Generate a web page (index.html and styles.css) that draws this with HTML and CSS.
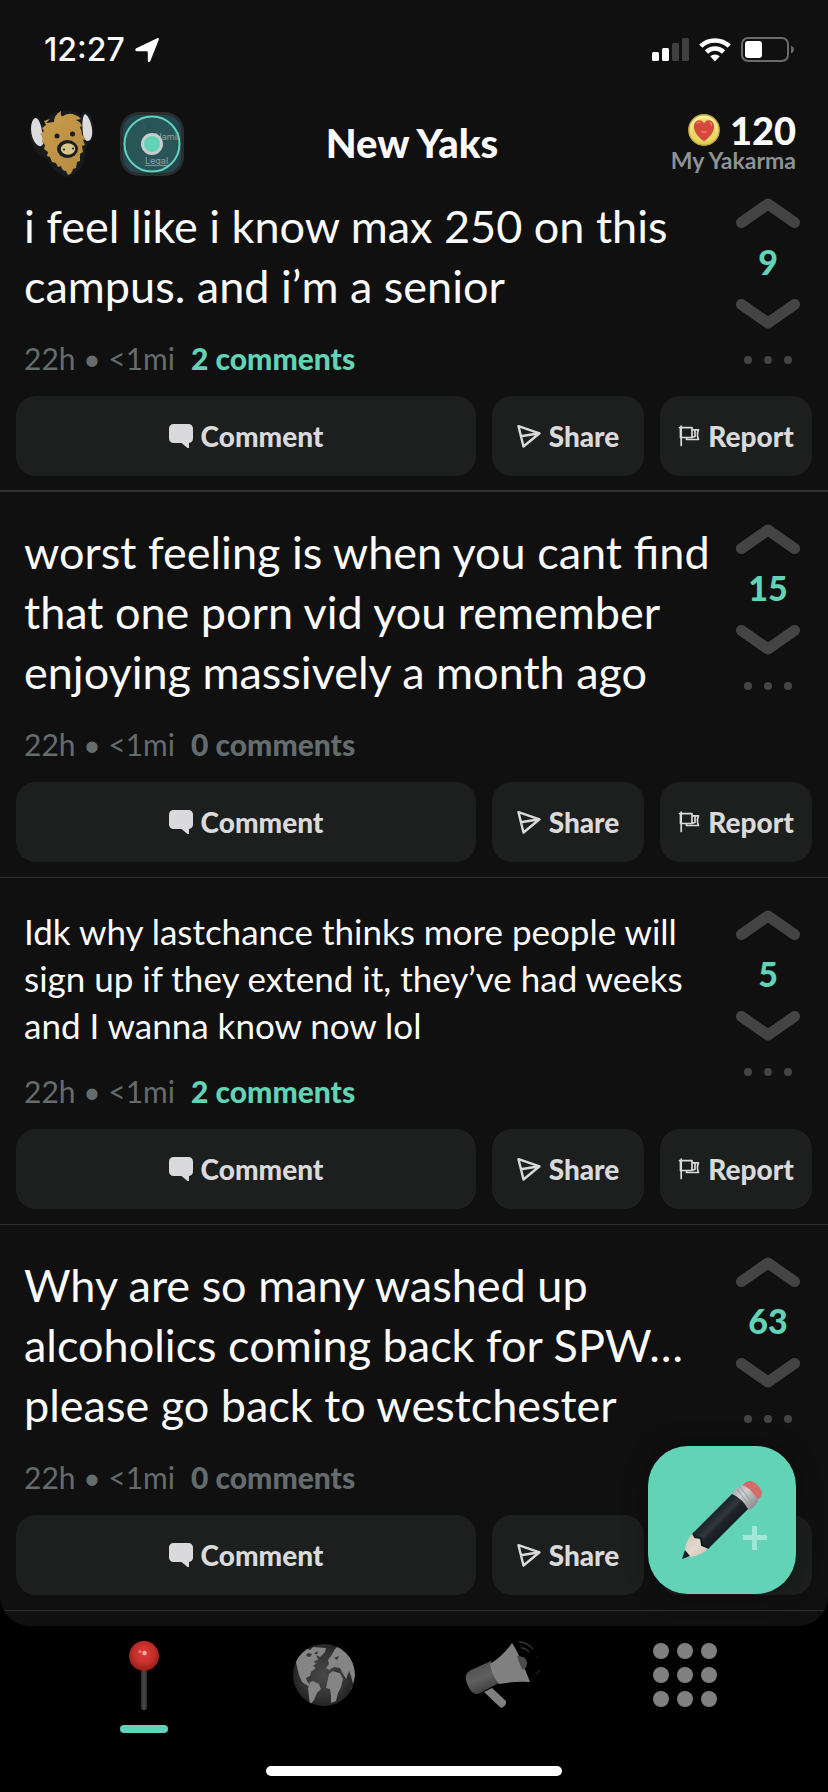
FILE: index.html
```
<!DOCTYPE html>
<html lang="en">
<head>
<meta charset="utf-8">
<meta name="viewport" content="width=device-width, initial-scale=1">
<title>New Yaks</title>
<link rel="stylesheet" href="styles.css">
</head>
<body>
<svg class="sprite" width="0" height="0" aria-hidden="true">
  <symbol id="i-up" viewBox="0 0 64 30"><path d="M5.500 24.500 32 6 58.500 24.500" fill="none" stroke="currentColor" stroke-width="11" stroke-linecap="round" stroke-linejoin="round"/></symbol>
  <symbol id="i-down" viewBox="0 0 64 30"><path d="M5.500 5.500 32 24 58.500 5.500" fill="none" stroke="currentColor" stroke-width="11" stroke-linecap="round" stroke-linejoin="round"/></symbol>
  <symbol id="i-dots" viewBox="0 0 48 8"><circle cx="4" cy="4" r="4"/><circle cx="24" cy="4" r="4"/><circle cx="44" cy="4" r="4"/></symbol>
  <symbol id="i-comment" viewBox="0 0 24 24"><path d="M4.500 0h15A4.500 4.500 0 0 1 24 4.500v10c0 2.500-1.500 4.300-4 4.500V24h-1.500L12.500 19h-8A4.500 4.500 0 0 1 0 14.500v-10A4.500 4.500 0 0 1 4.500 0z"/></symbol>
  <symbol id="i-share" viewBox="0 0 24 24"><path d="M1.500 2.200 22.500 9.300 6.500 22.500zM3.800 12.200 22.500 9.300" fill="none" stroke="currentColor" stroke-width="2.400" stroke-linejoin="round"/></symbol>
  <symbol id="i-flag" viewBox="0 0 22 22"><path d="M3.200 1v19.500M1.500 2.600H14V12.500H2.500V2.600M14 4.800h6.500c-1.500 3-1.500 6 0 9.700H8.500v-2M17 5v6.500l-3 .8" fill="none" stroke="currentColor" stroke-width="1.700" stroke-linejoin="round" stroke-linecap="round"/></symbol>
</svg>
<div class="app">
  <header class="top">
    <div class="status">
      <div class="status-left">
        <span class="clock">12:27</span>
        <svg width="24" height="24" viewBox="0 0 24 24" fill="#fff" aria-hidden="true"><path d="M1.300 10.300 22.200.2c1-.5 2 .5 1.600 1.600L15.300 23c-.5 1.400-2.500 1.300-2.500-.3v-8.200c0-.8-.4-1.200-1.200-1.200H1.900C0 13.300-.4 11.100 1.300 10.300z"/></svg>
      </div>
      <div class="status-right">
        <svg width="37" height="24" viewBox="0 0 37 24" aria-hidden="true"><g fill="#fff"><rect y="14" width="7" height="9" rx="1.500"/><rect x="10" y="10" width="7" height="13" rx="1.500"/></g><g fill="#404040"><rect x="20" y="5" width="7" height="18" rx="1.500"/><rect x="30" width="7" height="23" rx="1.500"/></g></svg>
        <svg width="32" height="24" viewBox="0 0 32 24" aria-hidden="true"><g fill="none" stroke="#fff" stroke-width="4.600"><path d="M1.800 8.200a20.400 20.400 0 0 1 28.400 0"/><path d="M7.400 14a12.300 12.300 0 0 1 17.200 0"/></g><path d="M11.200 18.300a7 7 0 0 1 9.600 0L16 23.500z" fill="#fff"/></svg>
        <svg width="53" height="26" viewBox="0 0 53 26" aria-hidden="true"><rect x="1" y="1" width="46" height="23" rx="6" fill="none" stroke="#6b6b6b" stroke-width="2"/><rect x="4" y="4" width="17" height="17" rx="3" fill="#fff"/><path d="M50 8.500q3 1.500 3 4t-3 4z" fill="#6b6b6b"/></svg>
      </div>
    </div>
    <div class="titlebar">
      <div class="tools">
        <button class="plain" aria-label="Profile">
          <svg width="68" height="68" viewBox="0 0 68 68">
            <defs><linearGradient id="fur" x1="0" x2="1" y2="1"><stop offset="0" stop-color="#c99d4c"/><stop offset="1" stop-color="#b48a3e"/></linearGradient></defs>
            <path d="M2 21C3 12 6 7 9 7q4 0 6 8l3-4q3-8 14-10 14-2 21 5 1-5 5-4 8 3 8 20-1 9-6 9-2 8-4 19c-2 9-6 13-17 17-8-2-14-8-20-18C9 44 1 36 2 21z" fill="#171b1e"/>
            <path d="M7 8c4-1 8 9 8 26-2 4-6 2-9-3C1 21 3 10 7 8zM57 4c6 3 10 21 5 26-3 3-7-1-7-7-1-8-1-16 2-19z" fill="#dcdbdd"/>
            <path d="m18 13 8-1q0-7 7-11-1 6 2 5 6-4 12-1 4 1 6 4l-5 1q5 2 6 6l-2 1q2 4 2 8l4 4-3 1 2 5-3 1 1 6-3 2v7l-3 1-1 6-3 1q-1 5-5 6l-2-4q-4 0-5-5l-3 1-2-4-4-1-2-5-3-1 1-4-4-3 1-4-3-3 1-5-3-3 4-3-2-3 4-3-2-4 6-2z" fill="url(#fur)"/>
            <circle cx="29" cy="26" r="2.500" fill="#171b20"/><circle cx="44.500" cy="24" r="2.500" fill="#171b20"/>
            <ellipse cx="39.500" cy="39" rx="10.500" ry="9" fill="#1b1d20"/><ellipse cx="40" cy="39" rx="7.200" ry="5.700" fill="#d6c588"/><circle cx="36" cy="39.500" r="1.100" fill="#292621"/><circle cx="45" cy="38.500" r="1.100" fill="#292621"/>
          </svg>
        </button>
        <button class="plain" aria-label="Map">
          <svg width="64" height="64" viewBox="0 0 64 64">
            <defs><clipPath id="mapclip"><rect x="3" y="3" width="58" height="58" rx="15"/></clipPath></defs>
            <rect width="64" height="64" rx="19" fill="#2a2d2e"/>
            <g clip-path="url(#mapclip)"><rect x="3" y="3" width="58" height="58" fill="#23464f"/><circle cx="32" cy="32" r="28" fill="#2a5557"/><path d="m21 6 5 13" stroke="#355b62" stroke-width="1"/>
            <text class="map-place" x="35" y="28">Hamil</text><text class="map-legal" x="25" y="52">Legal</text></g>
            <circle cx="32" cy="32" r="27.500" fill="none" stroke="#62d3b6" stroke-width="2"/>
            <circle cx="32" cy="32" r="11" fill="#c9cbce"/><circle cx="32" cy="32" r="8" fill="#62d3b6"/>
          </svg>
        </button>
      </div>
      <h1 class="title">New Yaks</h1>
      <div class="karma">
        <div class="karma-row">
          <svg width="32" height="32" viewBox="0 0 32 32" aria-hidden="true"><defs><linearGradient id="coin" x2="0" y2="1"><stop offset="0" stop-color="#fff3a0"/><stop offset="1" stop-color="#dfcb4e"/></linearGradient></defs><circle cx="16" cy="16" r="15.200" fill="url(#coin)" stroke="#c6a93c" stroke-width="1.400"/><circle cx="16" cy="16" r="11.500" fill="#e8d867"/><path d="M16 27.500C10 23 6 18 6 12.500 6 5.500 13.500 4 16 9.500 18.500 4 26 5.500 26 12.500 26 18 22 23 16 27.500z" fill="#d4493b"/><path d="M9 9.500q1.500-2 3-1M22 8.500q2 1 1.500 3M14 17.500q2 1.500 4 0" fill="none" stroke="#f08a7b" stroke-width="1.200" stroke-linecap="round"/></svg>
          <span class="karma-score">120</span>
        </div>
        <div class="karma-label">My Yakarma</div>
      </div>
    </div>
  </header>

  <main class="feed">
    <article class="post post-first">
      <div class="post-main">
        <div class="post-body">
          <p class="post-text">i feel like i know max 250 on this<br>campus. and i’m a senior</p>
          <div class="meta"><span>22h • &lt;1mi</span><span class="count active">2 comments</span></div>
        </div>
        <div class="votes">
          <button class="plain" aria-label="Upvote"><svg width="64" height="30"><use href="#i-up"/></svg></button>
          <span class="score">9</span>
          <button class="plain" aria-label="Downvote"><svg width="64" height="30"><use href="#i-down"/></svg></button>
          <button class="plain more" aria-label="More"><svg width="48" height="8" fill="currentColor"><use href="#i-dots"/></svg></button>
        </div>
      </div>
      <div class="actions">
        <button class="action"><svg width="24" height="24" fill="currentColor"><use href="#i-comment"/></svg>Comment</button>
        <button class="action"><svg width="24" height="24"><use href="#i-share"/></svg>Share</button>
        <button class="action"><svg width="22" height="22"><use href="#i-flag"/></svg>Report</button>
      </div>
    </article>

    <article class="post">
      <div class="post-main">
        <div class="post-body">
          <p class="post-text">worst feeling is when you cant find<br>that one porn vid you remember<br>enjoying massively a month ago</p>
          <div class="meta"><span>22h • &lt;1mi</span><span class="count">0 comments</span></div>
        </div>
        <div class="votes">
          <button class="plain" aria-label="Upvote"><svg width="64" height="30"><use href="#i-up"/></svg></button>
          <span class="score">15</span>
          <button class="plain" aria-label="Downvote"><svg width="64" height="30"><use href="#i-down"/></svg></button>
          <button class="plain more" aria-label="More"><svg width="48" height="8" fill="currentColor"><use href="#i-dots"/></svg></button>
        </div>
      </div>
      <div class="actions">
        <button class="action"><svg width="24" height="24" fill="currentColor"><use href="#i-comment"/></svg>Comment</button>
        <button class="action"><svg width="24" height="24"><use href="#i-share"/></svg>Share</button>
        <button class="action"><svg width="22" height="22"><use href="#i-flag"/></svg>Report</button>
      </div>
    </article>

    <article class="post">
      <div class="post-main">
        <div class="post-body">
          <p class="post-text small">Idk why lastchance thinks more people will<br>sign up if they extend it, they’ve had weeks<br>and I wanna know now lol</p>
          <div class="meta"><span>22h • &lt;1mi</span><span class="count active">2 comments</span></div>
        </div>
        <div class="votes">
          <button class="plain" aria-label="Upvote"><svg width="64" height="30"><use href="#i-up"/></svg></button>
          <span class="score">5</span>
          <button class="plain" aria-label="Downvote"><svg width="64" height="30"><use href="#i-down"/></svg></button>
          <button class="plain more" aria-label="More"><svg width="48" height="8" fill="currentColor"><use href="#i-dots"/></svg></button>
        </div>
      </div>
      <div class="actions">
        <button class="action"><svg width="24" height="24" fill="currentColor"><use href="#i-comment"/></svg>Comment</button>
        <button class="action"><svg width="24" height="24"><use href="#i-share"/></svg>Share</button>
        <button class="action"><svg width="22" height="22"><use href="#i-flag"/></svg>Report</button>
      </div>
    </article>

    <article class="post">
      <div class="post-main">
        <div class="post-body">
          <p class="post-text">Why are so many washed up<br>alcoholics coming back for SPW…<br>please go back to westchester</p>
          <div class="meta"><span>22h • &lt;1mi</span><span class="count">0 comments</span></div>
        </div>
        <div class="votes">
          <button class="plain" aria-label="Upvote"><svg width="64" height="30"><use href="#i-up"/></svg></button>
          <span class="score">63</span>
          <button class="plain" aria-label="Downvote"><svg width="64" height="30"><use href="#i-down"/></svg></button>
          <button class="plain more" aria-label="More"><svg width="48" height="8" fill="currentColor"><use href="#i-dots"/></svg></button>
        </div>
      </div>
      <div class="actions">
        <button class="action"><svg width="24" height="24" fill="currentColor"><use href="#i-comment"/></svg>Comment</button>
        <button class="action"><svg width="24" height="24"><use href="#i-share"/></svg>Share</button>
        <button class="action" aria-label="Report"></button>
      </div>
    </article>

    <button class="compose" aria-label="New yak">
      <svg width="148" height="148" viewBox="0 0 148 148">
        <defs>
          <linearGradient id="barrel" gradientUnits="userSpaceOnUse" x1="65" y1="66" x2="81" y2="82"><stop offset="0" stop-color="#1a2126"/><stop offset=".45" stop-color="#31383d"/><stop offset=".6" stop-color="#20262b"/><stop offset="1" stop-color="#151a1e"/></linearGradient>
          <linearGradient id="metal" gradientUnits="userSpaceOnUse" x1="86" y1="42" x2="106" y2="60"><stop offset="0" stop-color="#a7a7a9"/><stop offset=".4" stop-color="#cfcfd0"/><stop offset="1" stop-color="#8f9092"/></linearGradient>
          <linearGradient id="wood" x1="0" x2="1" y2="1"><stop offset="0" stop-color="#cfc4b6"/><stop offset=".5" stop-color="#e2dace"/><stop offset="1" stop-color="#cbbdaf"/></linearGradient>
        </defs>
        <path d="M94 41Q97 34 103 35q8 3 11 11 0 5-5 8z" fill="#d76b69"/>
        <path d="M84 49q2-7 10-10 8 2 16 15-2 7-9 10z" fill="url(#metal)"/>
        <path d="m89 43 14 19M92 41l14 18" stroke="#999b9d" stroke-width="1"/>
        <path d="M45 87q-7 6-8 17l1 5 4 2q11-1 19-9z" fill="url(#wood)"/>
        <path d="M84 48q10 4 16 15L61 102l-7-3v-7l-6-1-3-4z" fill="url(#barrel)"/>
        <path d="m45 87 2 4 6 1 1 7 7 3" fill="none" stroke="#12171a" stroke-width="2"/>
        <path d="M37 104l5 6-8 3z" fill="#182026"/>
        <path d="M104 80h5v9h10v5h-10v10h-5V94h-9v-5h9z" fill="#a2e6d6"/>
      </svg>
    </button>
  </main>

  <nav class="tabs" aria-label="Main">
    <div class="tab-row">
      <button class="tab current" aria-label="Nearby" aria-current="page">
        <svg width="80" height="76" viewBox="0 0 80 76">
          <defs><radialGradient id="ball" cx=".5" cy=".42" r=".6"><stop offset="0" stop-color="#dc4038"/><stop offset=".55" stop-color="#c52f29"/><stop offset="1" stop-color="#8e1d18"/></radialGradient><linearGradient id="stick"><stop offset="0" stop-color="#2b2b2b"/><stop offset=".5" stop-color="#4a4a4a"/><stop offset="1" stop-color="#2b2b2b"/></linearGradient></defs>
          <rect x="37" y="31" width="6" height="41" rx="2" fill="url(#stick)"/><circle cx="40" cy="18" r="15" fill="url(#ball)"/><circle cx="40.500" cy="15" r="2.200" fill="#f3b0ab"/><circle cx="36" cy="13.500" r="1.500" fill="#e7837c"/>
        </svg>
      </button>
      <button class="tab" aria-label="World">
        <svg width="80" height="76" viewBox="0 0 80 76">
          <defs><radialGradient id="sea"><stop offset="0" stop-color="#484848"/><stop offset=".7" stop-color="#343434"/><stop offset="1" stop-color="#242424"/></radialGradient><clipPath id="globe"><circle cx="40" cy="37" r="31"/></clipPath></defs>
          <circle cx="40" cy="37" r="31" fill="url(#sea)"/>
          <g clip-path="url(#globe)" fill="#858585">
            <path d="m13 17 8-7 5 2 3-3 13 1-1 4-5 5-4-2 2 4-1 4-4 3 3 2-5 4-1 4-4 2 1 3 3 4-2 1-6-4-3-7-2-8-1-5z"/>
            <path d="m26 44 3-1 6 3 2 5-4 4-3 7-4 5-1-8-1-9z"/>
            <path d="m47 18 4-7 6-5 8 8 7 12-1 12-2 8-2-8-2-5-3 8-3-5-3-6-6-1-5 3-3-2 3-4-1-4zM45 36l4-3 7 2 3 6-2 8-3 6-2 8-5 2v-8l-1-6-4-1z"/>
            <path d="m68 49 2 3-5 8-2 2 3-7z"/>
          </g>
          <g fill="#363636"><path d="m24 15 4 1-2 3-4-1zM30 16l3-3 1 3zM30 23l4-1-2 4zM49 31l7 1v3l-7-2zM50 20l5-2-2 4z"/></g>
        </svg>
      </button>
      <button class="tab" aria-label="Announcements">
        <svg width="80" height="76" viewBox="0 0 80 76">
          <defs><linearGradient id="horn" x1=".3" x2=".7" y2="1"><stop offset="0" stop-color="#4a4a4a"/><stop offset=".5" stop-color="#606060"/><stop offset="1" stop-color="#363636"/></linearGradient></defs>
          <path d="M2 37q1-3 5-5l20-9 8 22-21 11q-6 1-10-8Q1 41 2 37z" fill="url(#horn)"/>
          <path d="m20 54 8-4 14 13q1 5-5 7z" fill="#808080"/>
          <path d="M48 5q6 8 18 39-15-1-31 2-7-8-9-20Q39 18 48 5z" fill="#808080"/>
          <path d="M53 18q9 0 10 6 0 6-4 8-3-4-6-14z" fill="#4b4b4b"/>
          <path d="M55 4q8 0 14 7M57 10q5 0 8 4" fill="none" stroke="#333" stroke-width="1.500"/><path d="M72 18l1 1M75 32q0 3-3 4" stroke="#1d1d1d" stroke-width="1.500"/>
        </svg>
      </button>
      <button class="tab" aria-label="More">
        <svg width="80" height="76" viewBox="0 0 80 76" fill="#808080"><circle cx="17" cy="13" r="8"/><circle cx="41" cy="13" r="8"/><circle cx="65" cy="13" r="8"/><circle cx="17" cy="37" r="8"/><circle cx="41" cy="37" r="8"/><circle cx="65" cy="37" r="8"/><circle cx="17" cy="61" r="8"/><circle cx="41" cy="61" r="8"/><circle cx="65" cy="61" r="8"/></svg>
      </button>
    </div>
    <div class="home-bar"></div>
  </nav>
</div>
</body>
</html>
```
FILE: styles.css
```
* { box-sizing: border-box; }

body {
  margin: 0;
  background: #000;
  color: #fafafa;
  font-family: Lato, "Open Sans", sans-serif;
}

.sprite { position: absolute; }

svg { display: block; flex: none; }

button {
  margin: 0;
  padding: 0;
  border: 0;
  background: none;
  color: inherit;
  font: inherit;
  cursor: pointer;
}

.plain { display: block; }

.app {
  display: flex;
  flex-direction: column;
  min-height: 100vh;
}

/* Status bar and title; stays above the scrolled feed */
.top {
  position: relative;
  z-index: 1;
  padding-bottom: 8px;
  background: #101010;
}

.status {
  display: flex;
  justify-content: space-between;
  align-items: center;
  height: 100px;
  padding: 0 34px 0 44px;
}

.status-left,
.status-right {
  display: flex;
  align-items: center;
  gap: 10px;
}

.clock {
  font-family: Inter, "Liberation Sans", sans-serif;
  font-size: 32px;
  font-weight: 500;
  line-height: 40px;
}

.titlebar {
  display: grid;
  grid-template-columns: 1fr auto 1fr;
  align-items: center;
  height: 88px;
  padding: 0 32px 0 28px;
}

.tools {
  display: flex;
  align-items: center;
  gap: 24px;
}

.map-place,
.map-legal {
  font-family: Inter, sans-serif;
  font-size: 9px;
  fill: #8aa3a6;
}

.map-legal { text-decoration: underline; }

.title {
  margin: 0;
  padding-bottom: 2px;
  font-size: 40px;
  font-weight: 900;
  line-height: 48px;
}

.karma { justify-self: end; text-align: right; }

.karma-row {
  display: flex;
  justify-content: flex-end;
  align-items: center;
  gap: 10px;
}

.karma-score {
  font-size: 38px;
  font-weight: 900;
  line-height: 32px;
}

.karma-label {
  color: #8e9294;
  font-size: 23px;
  font-weight: 700;
  line-height: 28px;
}

/* Feed */
.feed {
  position: relative;
  margin-top: -30px;
  padding-bottom: 15px;
  border-radius: 0 0 30px 30px;
  background: #101010;
  overflow: hidden;
}

.post {
  padding: 30px 16px 15px;
  border-bottom: 1px solid #303030;
}

.post-first {
  padding-bottom: 14px;
  border-bottom-width: 2px;
}

.post-main {
  display: flex;
  justify-content: space-between;
  padding: 0 12px 0 8px;
}

.post-text {
  margin: 0;
  font-size: 45px;
  line-height: 60px;
  white-space: nowrap;
}

.post-text.small {
  font-size: 35px;
  line-height: 47px;
}

.meta {
  display: flex;
  gap: 16px;
  margin: 24px 0 20px;
  color: #646c6e;
  font-size: 30px;
  line-height: 36px;
}

.count { font-weight: 900; }

.count.active { color: #62d3b6; }

.votes {
  display: flex;
  flex-direction: column;
  align-items: center;
  padding-top: 2px;
  color: #444;
}

.score {
  padding: 14px 0 17px;
  color: #62d3b6;
  font-size: 34px;
  font-weight: 900;
  line-height: 40px;
}

.more { margin-top: 27px; }

.actions {
  display: grid;
  grid-template-columns: 1fr 152px 152px;
  gap: 16px;
}

.action {
  display: flex;
  justify-content: center;
  align-items: center;
  gap: 8px;
  height: 80px;
  border-radius: 20px;
  background: #1d1f1e;
  color: #dadadc;
  font-size: 28px;
  font-weight: 900;
}

.compose {
  position: absolute;
  right: 32px;
  bottom: 32px;
  border-radius: 40px;
  background: #62d3b6;
  box-shadow: 0 0 24px rgba(0, 0, 0, 0.35);
}

/* Bottom navigation */
.tabs {
  display: flex;
  flex-direction: column;
  justify-content: space-between;
  flex: 1;
  min-height: 164px;
  padding: 12px 54px 16px;
}

.tab-row {
  display: grid;
  grid-template-columns: repeat(4, 1fr);
}

.tab {
  display: flex;
  flex-direction: column;
  align-items: center;
  gap: 11px;
}

.current::after {
  width: 48px;
  height: 8px;
  border-radius: 4px;
  background: #62d3b6;
  content: "";
}

.home-bar {
  align-self: center;
  width: 296px;
  height: 10px;
  border-radius: 5px;
  background: #fff;
}
```
